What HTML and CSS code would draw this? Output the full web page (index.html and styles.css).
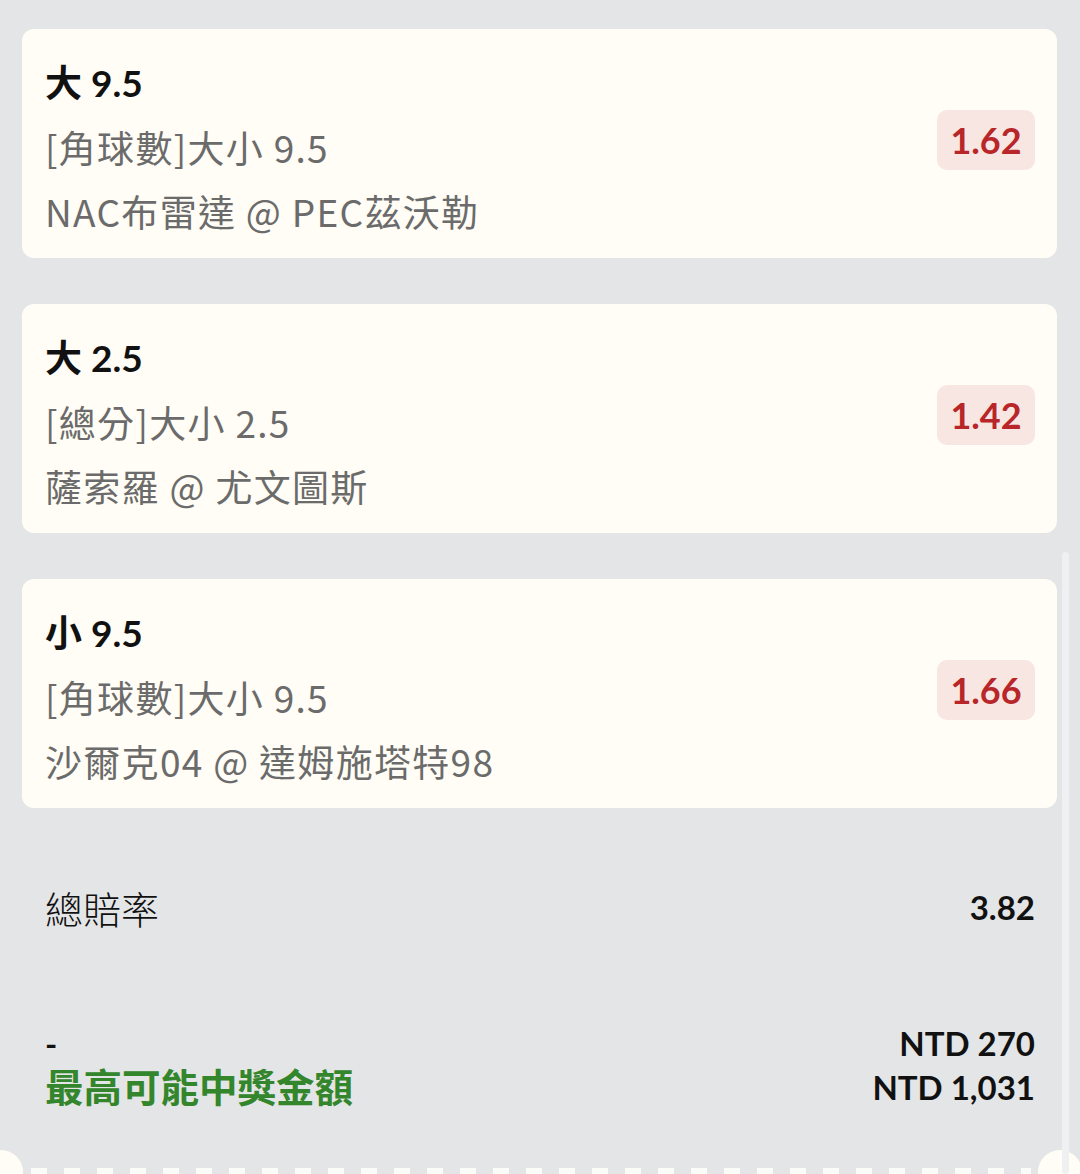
FILE: index.html
```html
<!DOCTYPE html>
<html lang="zh-Hant">
<head>
  <meta charset="UTF-8">
  <meta name="viewport" content="width=device-width, initial-scale=1.0">
  <title>投注單</title>
  <link rel="stylesheet" href="styles.css">
</head>
<body>

  <div id="slip">
    <div id="betList">
      <div class="betCard">
        <div class="betInfo">
          <div class="betPick">大 9.5</div>
          <div class="betMarket">[角球數]大小 9.5</div>
          <div class="betMatch">NAC布雷達 @ PEC茲沃勒</div>
        </div>
        <div class="betOdds">1.62</div>
      </div>

      <div class="betCard">
        <div class="betInfo">
          <div class="betPick">大 2.5</div>
          <div class="betMarket">[總分]大小 2.5</div>
          <div class="betMatch">薩索羅 @ 尤文圖斯</div>
        </div>
        <div class="betOdds">1.42</div>
      </div>

      <div class="betCard">
        <div class="betInfo">
          <div class="betPick">小 9.5</div>
          <div class="betMarket">[角球數]大小 9.5</div>
          <div class="betMatch">沙爾克04 @ 達姆施塔特98</div>
        </div>
        <div class="betOdds">1.66</div>
      </div>
    </div>

    <div id="summary">
      <div class="totalRow">
        <span class="totalLabel">總賠率</span>
        <span class="totalValue">3.82</span>
      </div>

      <div class="payoutRow">
        <span class="stake">-</span>
        <span class="amount">NTD 270</span>
        <span class="payoutLabel">最高可能中獎金額</span>
        <span class="amount">NTD 1,031</span>
      </div>
    </div>

    <div id="ticketEdge"></div>
    <div id="scrollbar"></div>
  </div>

</body>
</html>
```

FILE: styles.css
```css
body {
  font-family: Lato, "Noto Sans CJK TC", sans-serif;
  background-color: #e4e5e7;
  margin: 0;
  padding: 0;
  height: 1174px;
  overflow: hidden;
}

#slip {
  position: relative;
  height: 1174px;
}

#betList {
  padding: 29px 23px 0 22px;
  display: flex;
  flex-direction: column;
  gap: 46px;
}

.betCard {
  background-color: #fffdf5;
  border-radius: 12px;
  height: 229px;
  box-sizing: border-box;
  padding: 22px 22px 15px 23px;
  display: flex;
  align-items: flex-start;
  justify-content: space-between;
}

.betInfo {
  line-height: 64px;
}

.betPick {
  font-weight: bold;
  font-size: 37px;
  color: #111;
}

.betMarket,
.betMatch {
  font-family: "Noto Sans CJK TC", sans-serif;
  font-size: 37px;
  letter-spacing: 1.3px;
  color: #6b6b6b;
  font-weight: 400;
}

.betOdds {
  background-color: #f7e6e1;
  color: #b8262a;
  font-weight: bold;
  font-size: 36px;
  width: 98px;
  height: 60px;
  border-radius: 10px;
  display: flex;
  align-items: center;
  justify-content: center;
  margin-top: 59px;
}

#summary {
  padding: 67px 45px 0 45px;
  color: #111;
}

.totalRow {
  display: flex;
  justify-content: space-between;
  align-items: center;
  height: 64px;
}

.totalLabel {
  font-family: "Noto Sans CJK TC", sans-serif;
  font-size: 38px;
  font-weight: 300;
}

.totalValue {
  font-weight: bold;
  font-size: 33px;
}

.payoutRow {
  margin-top: 82px;
  display: grid;
  grid-template-columns: 1fr auto;
  line-height: 44px;
  font-weight: bold;
  font-size: 33px;
}

.amount {
  text-align: right;
}

.payoutLabel {
  color: #33862b;
  font-size: 38.5px;
}

#ticketEdge {
  position: absolute;
  left: 0;
  right: 0;
  top: 1150px;
  height: 24px;
  background-image: repeating-linear-gradient(to right, #fbfbf7 0, #fbfbf7 16px, transparent 16px, transparent 33px);
  background-size: 1000px 6px;
  background-position: 31px 18px;
  background-repeat: no-repeat;
}

#ticketEdge::before,
#ticketEdge::after {
  content: "";
  position: absolute;
  top: 0;
  width: 44px;
  height: 44px;
  border-radius: 50%;
  background-color: #fffdf5;
}

#ticketEdge::before {
  left: -21px;
}

#ticketEdge::after {
  left: 1038px;
}

#scrollbar {
  position: absolute;
  left: 1062px;
  top: 552px;
  width: 7px;
  height: 622px;
  border-radius: 4px;
  background-color: #eff0f2;
}
```
